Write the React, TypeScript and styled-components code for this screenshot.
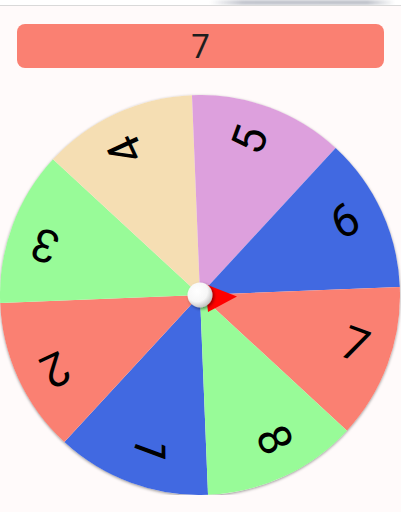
import React from 'react';
import styled, { createGlobalStyle } from 'styled-components';

const GlobalStyle = createGlobalStyle`
    body{
        margin: 0;
        background: #fffafa;
        font-family: Roboto, "Noto Sans", sans-serif;
    }
`

const TopStrip = styled.div`
    height: 5px;
    background: #fff;
    border-bottom: 1px solid #d9d9d9;
    display: flex;
    justify-content: flex-end;
    overflow: hidden;
    .shade{
        width: 185px;
        height: 5px;
        margin-right: 6px;
        background: linear-gradient(90deg, rgba(200,202,210,0) 0%, #c4c7cf 18%, #c2c5cd 85%, rgba(200,202,210,0) 100%);
        filter: blur(1px);
    }
`

const Result = styled.div`
    margin: 18px 17px 0;
    height: 44px;
    border-radius: 8px;
    background: #fa8072;
    color: #1e1e1e;
    font-size: 33px;
    display: flex;
    align-items: center;
    justify-content: center;
`

const WheelBox = styled.div`
    margin-top: 27px;
    width: 400px;
    height: 400px;
    border-radius: 50%;
    box-shadow: 0 1px 3px rgba(0,0,0,0.4);
    svg{
        display: block;
    }
    text{
        font-family: Roboto, "Noto Sans", sans-serif;
        font-size: 46px;
        fill: #000;
    }
`

const COLORS = ['#4169e1', '#fa8072', '#98fb98', '#f5deb3', '#dda0dd'];
const START = 87.7;
const R = 200;
const C = 200;

const pt = (deg: number, r: number) => {
    const a = deg * Math.PI / 180;
    return [C + r * Math.cos(a), C + r * Math.sin(a)];
}

const Slice = ({index}: {index: number}) => {
    const a0 = START + index * 45;
    const a1 = a0 + 45;
    const [x0, y0] = pt(a0, R);
    const [x1, y1] = pt(a1, R);
    const mid = a0 + 22.5;
    const [tx, ty] = pt(mid - 2.5, 163);
    return <g>
        <path d={`M ${C} ${C} L ${x0} ${y0} A ${R} ${R} 0 0 1 ${x1} ${y1} Z`} fill={COLORS[index % COLORS.length]} />
        <text x={tx} y={ty} textAnchor="middle" dominantBaseline="central" transform={`rotate(${mid} ${tx} ${ty})`}>
            {index + 1}
        </text>
    </g>
}

const App = () => {
    return <>
        <GlobalStyle />
        <TopStrip><div className="shade" /></TopStrip>
        <Result>7</Result>
        <WheelBox>
            <svg width="400" height="400" viewBox="0 0 400 400">
                <defs>
                    <radialGradient id="hub" cx="38%" cy="35%" r="70%">
                        <stop offset="0%" stopColor="#ffffff" />
                        <stop offset="60%" stopColor="#f7f7f7" />
                        <stop offset="100%" stopColor="#bdbdbd" />
                    </radialGradient>
                    <filter id="sh" x="-50%" y="-50%" width="200%" height="200%">
                        <feDropShadow dx="1.5" dy="1.5" stdDeviation="1.5" floodColor="#000" floodOpacity="0.45" />
                    </filter>
                </defs>
                {Array.from({length: 8}).map((_, i) => <Slice key={i} index={i} />)}
                <polygon points="205,189 237,201.5 208,217" fill="#ff0000" />
                <circle cx="200" cy="200" r="12.5" fill="url(#hub)" filter="url(#sh)" />
            </svg>
        </WheelBox>
    </>
}

export default App;
